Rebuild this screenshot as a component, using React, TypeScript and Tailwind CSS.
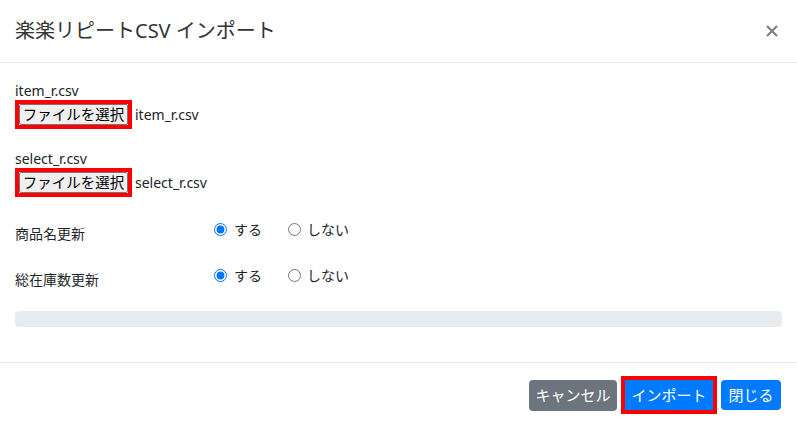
import React from 'react';

const font = "font-['Noto_Sans','Noto_Sans_CJK_JP',sans-serif]";

function FileField({ label, file }: { label: string; file: string }) {
  return (
    <div>
      <div className="text-[14px] leading-[19px] h-[19px]">{label}</div>
      <div className="flex items-center">
        <div className="border-4 border-[#ff0000] w-[117px] h-[29px] flex">
          <button className="flex-1 bg-[#efefef] border border-[#767676] rounded-[2px] text-[14.5px] leading-[19px] text-black px-[1px] whitespace-nowrap">
            ファイルを選択
          </button>
        </div>
        <span className="ml-[3px] text-[14px]">{file}</span>
      </div>
    </div>
  );
}

function RadioRow({ label, name }: { label: string; name: string }) {
  return (
    <div className="flex h-[46px]">
      <div className="w-[199px] pt-[5px] text-[14px] leading-[24px]">{label}</div>
      <div className="flex items-center h-[24px] text-[14px]">
        <label className="flex items-center">
          <input type="radio" name={name} defaultChecked className="m-0 w-[13px] h-[13px]" />
          <span className="ml-[7px]">する</span>
        </label>
        <label className="flex items-center ml-[26px]">
          <input type="radio" name={name} className="m-0 w-[13px] h-[13px]" />
          <span className="ml-[6px]">しない</span>
        </label>
      </div>
    </div>
  );
}

export default function App() {
  return (
    <div className={`w-[797px] h-[427px] bg-white text-[#212529] ${font}`}>
      {/* Header */}
      <div className="h-[63px] border-b border-[#e9ecef] flex items-center justify-between pl-[15px] pr-[19px]">
        <h5 className="text-[20px] leading-[24px] font-normal text-[#333]">楽楽リピートCSV インポート</h5>
        <button className="text-[#808080]">
          <svg width="12" height="12" viewBox="0 0 12 12">
            <path d="M1 1L11 11M11 1L1 11" stroke="currentColor" strokeWidth="2.2" />
          </svg>
        </button>
      </div>

      {/* Body */}
      <div className="px-[15px] pt-[18px] pb-[35px]">
        <FileField label="item_r.csv" file="item_r.csv" />
        <div className="mt-[20px]">
          <FileField label="select_r.csv" file="select_r.csv" />
        </div>
        <div className="mt-[20px]">
          <RadioRow label="商品名更新" name="name" />
          <RadioRow label="総在庫数更新" name="stock" />
        </div>
        <div className="mt-[2px] h-[16px] rounded-[4px] bg-[#e9ecef]" />
      </div>

      {/* Footer */}
      <div className="border-t border-[#e9ecef] flex justify-end items-center gap-[4px] pr-[16px] pt-[13px]">
        <button className="h-[31px] w-[88px] rounded-[4px] bg-[#6c757d] text-white text-[15px]">キャンセル</button>
        <div className="border-4 border-[#ff0000] h-[38px] w-[96px] flex">
          <button className="flex-1 bg-[#007bff] text-white text-[15px]">インポート</button>
        </div>
        <button className="h-[30px] w-[60px] rounded-[4px] bg-[#007bff] text-white text-[15px]">閉じる</button>
      </div>
    </div>
  );
}
